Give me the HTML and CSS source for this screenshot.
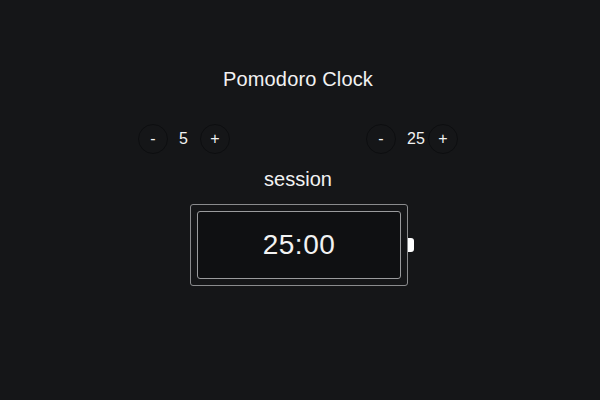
FILE: index.html
```html
<!DOCTYPE html>
<html>
<head>
<meta charset="utf-8">
<link rel="stylesheet" href="styles.css">
</head>
<body>
<main class="app">
  <h1 class="title">Pomodoro Clock</h1>
  <div class="controls">
    <div class="group">
      <button class="circle">-</button>
      <span class="value">5</span>
      <button class="circle">+</button>
    </div>
    <div class="group">
      <button class="circle">-</button>
      <span class="value">25</span>
      <button class="circle">+</button>
    </div>
  </div>
  <div class="label">session</div>
  <div class="timer-row">
    <div class="timer">
      <div class="screen">25:00</div>
    </div>
    <div class="nub"></div>
  </div>
</main>
</body>
</html>
```
FILE: styles.css
```css
html, body {
  margin: 0;
  padding: 0;
  background: #151618;
  color: #f2f2f2;
  font-family: "Liberation Sans", Arial, sans-serif;
}
.app {
  padding-top: 67px;
  padding-right: 4px;
  display: flex;
  flex-direction: column;
  align-items: center;
}
.title {
  margin: 0;
  font-size: 20px;
  font-weight: normal;
  line-height: 24px;
  letter-spacing: 0.15px;
}
.controls {
  margin-top: 33px;
  display: flex;
  gap: 136px;
}
.group {
  display: flex;
  align-items: center;
}
.circle {
  width: 30px;
  height: 30px;
  border-radius: 50%;
  border: 1px solid #0d0e10;
  background: transparent;
  color: #f2f2f2;
  font-family: "Liberation Sans", Arial, sans-serif;
  font-size: 16px;
  padding: 0;
  display: flex;
  align-items: center;
  justify-content: center;
}
.value {
  width: 32px;
  box-sizing: border-box;
  padding-left: 11px;
  font-size: 16px;
  line-height: 30px;
}
.label {
  margin-top: 13px;
  font-size: 20px;
  line-height: 24px;
}
.timer-row {
  margin-top: 13px;
  display: flex;
  align-items: center;
  margin-left: 8px;
}
.timer {
  width: 218px;
  height: 82px;
  box-sizing: border-box;
  border: 1px solid #8a8b8d;
  border-radius: 3px;
  padding: 6px;
}
.screen {
  height: 100%;
  box-sizing: border-box;
  border: 1px solid #9a9b9d;
  border-radius: 3px;
  background: #0f1012;
  display: flex;
  align-items: center;
  justify-content: center;
  font-size: 28px;
  letter-spacing: 0.5px;
}
.nub {
  width: 6px;
  height: 14px;
  background: #ffffff;
  border-radius: 0 3px 3px 0;
}
```
